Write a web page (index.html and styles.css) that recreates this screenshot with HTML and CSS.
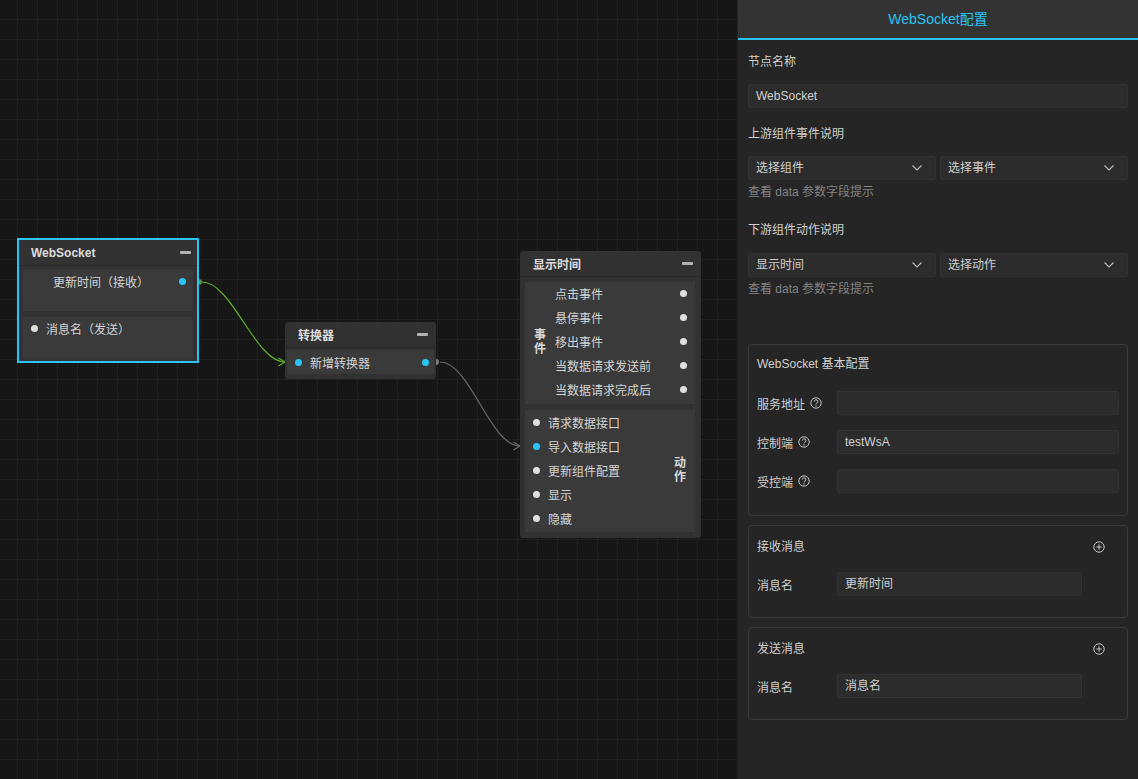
FILE: index.html
```html
<!DOCTYPE html>
<html lang="zh-CN">
<head>
<meta charset="utf-8">
<title>WebSocket配置</title>
<link rel="stylesheet" href="styles.css">
</head>
<body>
<div class="app">
  <main class="canvas">
    <svg class="edges" width="738" height="779" viewBox="0 0 738 779">
      <path class="edge edge-green" d="M202 282 C 232 282, 255 362, 285 362"/>
      <polyline class="edge edge-green" points="278.5,358 285,362 278.5,366"/>
      <path class="edge edge-grey" d="M440 362 C 470 362, 490 446, 520 446"/>
      <polyline class="edge edge-grey" points="513.5,442 520,446 513.5,450"/>
    </svg>

    <div class="node node-ws">
      <div class="node-head"><span class="node-title">WebSocket</span><span class="collapse"></span></div>
      <div class="node-body ws-body">
        <div class="port-block recv">
          <div class="port-row"><span class="port-label">更新时间（接收）</span><span class="dot dot-cyan"></span></div>
        </div>
        <div class="port-block send">
          <div class="port-row"><span class="dot dot-light"></span><span class="port-label">消息名（发送）</span></div>
        </div>
      </div>
    </div>

    <div class="node node-conv">
      <div class="node-head"><span class="node-title">转换器</span><span class="collapse"></span></div>
      <div class="node-body conv-body">
        <div class="conv-item"><span class="dot dot-cyan"></span><span class="port-label">新增转换器</span><span class="dot dot-cyan push"></span></div>
      </div>
    </div>

    <div class="node node-show">
      <div class="node-head"><span class="node-title">显示时间</span><span class="collapse"></span></div>
      <div class="node-body show-body">
        <div class="group events">
          <div class="group-label"><span>事件</span></div>
          <ul class="group-list">
            <li><span class="port-label">点击事件</span><span class="dot dot-light"></span></li>
            <li><span class="port-label">悬停事件</span><span class="dot dot-light"></span></li>
            <li><span class="port-label">移出事件</span><span class="dot dot-light"></span></li>
            <li><span class="port-label">当数据请求发送前</span><span class="dot dot-light"></span></li>
            <li><span class="port-label">当数据请求完成后</span><span class="dot dot-light"></span></li>
          </ul>
        </div>
        <div class="group actions">
          <ul class="group-list">
            <li><span class="dot dot-light"></span><span class="port-label">请求数据接口</span></li>
            <li><span class="dot dot-cyan"></span><span class="port-label">导入数据接口</span></li>
            <li><span class="dot dot-light"></span><span class="port-label">更新组件配置</span></li>
            <li><span class="dot dot-light"></span><span class="port-label">显示</span></li>
            <li><span class="dot dot-light"></span><span class="port-label">隐藏</span></li>
          </ul>
          <div class="group-label"><span>动作</span></div>
        </div>
      </div>
    </div>

    <svg class="ports" width="738" height="779" viewBox="0 0 738 779">
      <path class="port-green" d="M199 279 A3 3 0 0 1 199 285 Z"/>
      <path class="port-grey" d="M436 359 A3 3 0 0 1 436 365 Z"/>
    </svg>
  </main>

  <aside class="panel">
    <header class="panel-head">WebSocket配置</header>
    <div class="panel-body">
      <div class="field-label first">节点名称</div>
      <div class="input name-input">WebSocket</div>

      <div class="field-label up">上游组件事件说明</div>
      <div class="select-row sel-up">
        <div class="select"><span>选择组件</span><svg class="chev" width="10" height="6" viewBox="0 0 10 6"><polyline points="0.5,0.5 5,5 9.5,0.5"/></svg></div>
        <div class="select"><span>选择事件</span><svg class="chev" width="10" height="6" viewBox="0 0 10 6"><polyline points="0.5,0.5 5,5 9.5,0.5"/></svg></div>
      </div>
      <div class="hint">查看 data 参数字段提示</div>

      <div class="field-label down">下游组件动作说明</div>
      <div class="select-row sel-down">
        <div class="select"><span>显示时间</span><svg class="chev" width="10" height="6" viewBox="0 0 10 6"><polyline points="0.5,0.5 5,5 9.5,0.5"/></svg></div>
        <div class="select"><span>选择动作</span><svg class="chev" width="10" height="6" viewBox="0 0 10 6"><polyline points="0.5,0.5 5,5 9.5,0.5"/></svg></div>
      </div>
      <div class="hint">查看 data 参数字段提示</div>

      <section class="card card-basic">
        <div class="card-title">WebSocket 基本配置</div>
        <div class="card-row">
          <div class="row-label">服务地址<svg class="qicon" width="12" height="12" viewBox="0 0 12 12"><circle cx="6" cy="6" r="5.2"/><path d="M4.3 4.6 A1.8 1.8 0 1 1 6.6 6.3 C6.1 6.5 6 6.8 6 7.4"/><circle class="qdot" cx="6" cy="9" r="0.7"/></svg></div>
          <div class="input grow"></div>
        </div>
        <div class="card-row">
          <div class="row-label">控制端<svg class="qicon" width="12" height="12" viewBox="0 0 12 12"><circle cx="6" cy="6" r="5.2"/><path d="M4.3 4.6 A1.8 1.8 0 1 1 6.6 6.3 C6.1 6.5 6 6.8 6 7.4"/><circle class="qdot" cx="6" cy="9" r="0.7"/></svg></div>
          <div class="input grow">testWsA</div>
        </div>
        <div class="card-row">
          <div class="row-label">受控端<svg class="qicon" width="12" height="12" viewBox="0 0 12 12"><circle cx="6" cy="6" r="5.2"/><path d="M4.3 4.6 A1.8 1.8 0 1 1 6.6 6.3 C6.1 6.5 6 6.8 6 7.4"/><circle class="qdot" cx="6" cy="9" r="0.7"/></svg></div>
          <div class="input grow"></div>
        </div>
      </section>

      <section class="card card-msg">
        <div class="card-title with-add"><span>接收消息</span><svg class="add" width="12" height="12" viewBox="0 0 12 12"><circle cx="6" cy="6" r="5.2"/><path d="M6 3.3 V8.7 M3.3 6 H8.7"/></svg></div>
        <div class="card-row">
          <div class="row-label">消息名</div>
          <div class="input fixed">更新时间</div>
        </div>
      </section>

      <section class="card card-msg">
        <div class="card-title with-add"><span>发送消息</span><svg class="add" width="12" height="12" viewBox="0 0 12 12"><circle cx="6" cy="6" r="5.2"/><path d="M6 3.3 V8.7 M3.3 6 H8.7"/></svg></div>
        <div class="card-row">
          <div class="row-label">消息名</div>
          <div class="input fixed">消息名</div>
        </div>
      </section>
    </div>
  </aside>
</div>
</body>
</html>
```

FILE: styles.css
```css
* { box-sizing: border-box; }

html, body {
  margin: 0;
  padding: 0;
  background: #161616;
}

body {
  font-family: "Liberation Sans", "Noto Sans CJK SC", sans-serif;
  font-size: 12px;
  color: #cfcfcf;
}

.app {
  display: flex;
  width: 1138px;
  height: 779px;
  overflow: hidden;
}

/* ---------- canvas ---------- */
.canvas {
  position: relative;
  flex: 0 0 738px;
  height: 779px;
  overflow: hidden;
  background-color: #161616;
  background-image:
    linear-gradient(to right, #202020 1px, transparent 1px),
    linear-gradient(to bottom, #202020 1px, transparent 1px);
  background-size: 20px 20px;
  background-position: 17px 19px;
}

.edges, .ports {
  position: absolute;
  left: 0;
  top: 0;
  pointer-events: none;
}
.ports { z-index: 3; }

.edge { fill: none; stroke-width: 1.2; }
.edge-green { stroke: #5fae2b; }
.edge-grey { stroke: #6a6a6a; }
.port-green { fill: #5d8f3c; }
.port-grey { fill: #7a7a7a; }

.node {
  position: absolute;
  z-index: 2;
  background: #313131;
  border-radius: 3px;
  display: flex;
  flex-direction: column;
}

.node-head {
  display: flex;
  align-items: center;
  justify-content: space-between;
  height: 26px;
  border-bottom: 1px solid #292929;
  padding: 0 8px 0 13px;
}
.node-title {
  font-weight: bold;
  color: #dcdcdc;
  font-size: 12px;
}
.collapse {
  width: 11px;
  height: 3px;
  background: #b3b3b3;
  border-radius: 1px;
}

.port-label { color: #d4d4d4; white-space: nowrap; }

.dot {
  flex: 0 0 7px;
  width: 7px;
  height: 7px;
  border-radius: 50%;
}
.dot-cyan { background: #29c4f5; }
.dot-light { background: #dedede; }

/* WebSocket node */
.node-ws {
  left: 17px;
  top: 238px;
  width: 182px;
  height: 125px;
  border: 2px solid #2ac5f5;
  border-radius: 0;
  background: #323232;
}
.node-ws .node-head {
  height: 26px;
  padding: 0 6px 0 12px;
}
.ws-body {
  display: flex;
  flex-direction: column;
  gap: 6px;
  padding: 4px 4px 3px;
}
.port-block {
  height: 41px;
  background: #3a3a3a;
}
.port-row {
  display: flex;
  align-items: center;
  height: 22px;
}
.recv .port-row {
  justify-content: space-between;
  padding: 0 7.5px 0 30px;
}
.send .port-row {
  gap: 8px;
  padding-left: 8px;
}

/* converter node */
.node-conv {
  left: 285px;
  top: 322px;
  width: 151px;
  height: 57px;
}
.conv-body {
  padding: 2px 2px 5px;
}
.conv-item {
  display: flex;
  align-items: center;
  gap: 8px;
  height: 24px;
  background: #3a3a3a;
  padding: 0 5.5px 0 8px;
}
.conv-item .push { margin-left: auto; }

/* display node */
.node-show {
  left: 520px;
  top: 251px;
  width: 181px;
  height: 287px;
}
.show-body {
  display: flex;
  flex-direction: column;
  gap: 6px;
  padding: 5px 6px 6px 5px;
}
.group {
  display: flex;
  height: 122px;
  background: #3a3a3a;
  padding: 0 0 2px;
}
.events .group-list { margin-top: -1px; }
.group-label {
  flex: 0 0 30px;
  display: flex;
  align-items: center;
  justify-content: center;
}
.group-label span {
  width: 12px;
  line-height: 14px;
  font-weight: bold;
  color: #d8d8d8;
  word-break: break-all;
}
.group-list {
  list-style: none;
  margin: 0;
  padding: 0;
  flex: 1;
}
.group-list li {
  display: flex;
  align-items: center;
  height: 24px;
}
.events .group-list li {
  justify-content: space-between;
  padding-right: 8.5px;
}
.actions .group-list li {
  gap: 8px;
  padding-left: 8px;
}

/* ---------- panel ---------- */
.panel {
  flex: 0 0 400px;
  height: 779px;
  background: #252525;
  display: flex;
  flex-direction: column;
}
.panel-head {
  height: 40px;
  line-height: 38px;
  background: #333333;
  border-bottom: 2px solid #29c4f5;
  text-align: center;
  color: #29c4f5;
  font-size: 14px;
}
.panel-body {
  padding: 0 10px;
}

.field-label {
  line-height: 16px;
  color: #cfcfcf;
}
.field-label.first { margin-top: 14px; margin-bottom: 14px; }
.field-label.up { margin-top: 18px; margin-bottom: 14px; }
.field-label.down { margin-top: 22px; margin-bottom: 15px; }

.input {
  height: 24px;
  line-height: 22px;
  background: #2c2c2c;
  border: 1px solid #323232;
  border-radius: 2px;
  padding: 0 7px;
  color: #d0d0d0;
  white-space: nowrap;
}

.select-row {
  display: flex;
  gap: 4px;
}
.select {
  flex: 1;
  display: flex;
  align-items: center;
  justify-content: space-between;
  height: 24px;
  background: #2c2c2c;
  border: 1px solid #323232;
  border-radius: 2px;
  padding: 0 13px 1px 7px;
  color: #d0d0d0;
}
.select span { line-height: 16px; }
.chev { margin-top: 1px; }
.chev polyline {
  fill: none;
  stroke: #bdbdbd;
  stroke-width: 1.1;
}

.hint {
  margin-top: 4px;
  line-height: 16px;
  color: #838383;
}

.card {
  border: 1px solid #3a3a3a;
  border-radius: 4px;
  padding: 11px 8px 21px;
}
.card-basic { margin-top: 47px; padding-bottom: 22px; }
.card-msg { margin-top: 9px; padding-top: 13px; }

.card-title {
  line-height: 16px;
  color: #d0d0d0;
}
.card-title.with-add {
  display: flex;
  align-items: center;
  justify-content: space-between;
  padding-right: 14px;
}
.add circle, .add path {
  fill: none;
  stroke: #c4c4c4;
  stroke-width: 1;
}

.card-row {
  display: flex;
  align-items: center;
  margin-top: 15px;
}
.card-title + .card-row { margin-top: 19px; }
.card-msg .card-title + .card-row { margin-top: 17px; }

.row-label {
  flex: 0 0 80px;
  display: flex;
  align-items: center;
  gap: 5px;
  color: #cfcfcf;
}
.qicon circle, .qicon path {
  fill: none;
  stroke: #c4c4c4;
  stroke-width: 1;
}
.qicon .qdot { fill: #c4c4c4; stroke: none; }

.input.grow { flex: 1; }
.input.fixed { flex: 0 0 245px; }
```
